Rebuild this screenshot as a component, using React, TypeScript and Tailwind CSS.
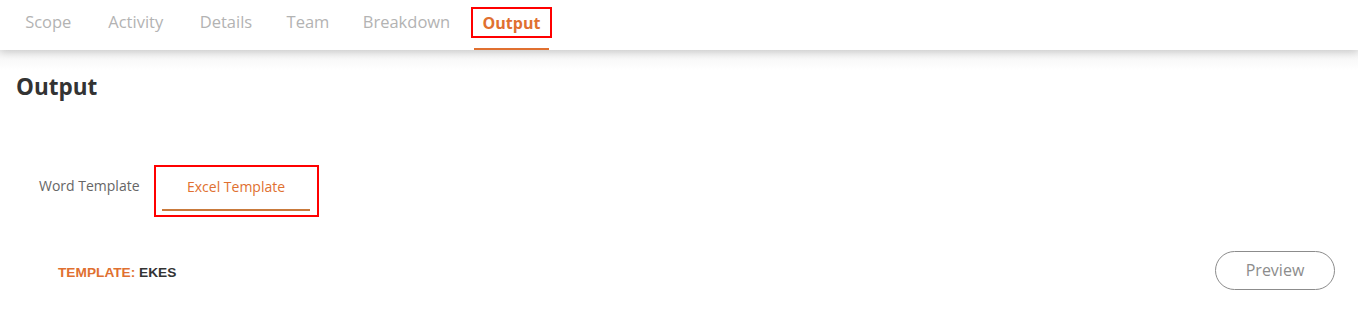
import React from "react";

const tabs: { label: string; w: string }[] = [
  { label: "Scope", w: "w-[82.5px]" },
  { label: "Activity", w: "w-[92.5px]" },
  { label: "Details", w: "w-[88px]" },
  { label: "Team", w: "w-[76px]" },
  { label: "Breakdown", w: "w-[121px]" },
];

export default function App() {
  return (
    <div className="w-[1358px] h-[312px] bg-white overflow-hidden" style={{ fontFamily: '"Open Sans", sans-serif' }}>
      <div className="relative z-10 h-[50px] bg-white shadow-[0_2px_8px_rgba(0,0,0,0.18)] flex items-start pl-[7px]">
        {tabs.map((t) => (
          <div key={t.label} className={`${t.w} h-[45px] flex items-center justify-center`}>
            <span className="text-[16.5px] text-[#b3b3b3] leading-none">{t.label}</span>
          </div>
        ))}
        <div className="relative ml-[4px] h-[50px]">
          <div className="mt-[7px] border-2 border-[#ff0000] w-[81px] h-[31px] flex items-center justify-center">
            <span className="text-[16px] font-bold text-[#e07030] leading-none">Output</span>
          </div>
          <div className="absolute bottom-0 left-[3px] right-[3px] h-[2px] bg-[#e07030]" />
        </div>
      </div>
      <div className="bg-gradient-to-b from-[#f3f3f3] to-white h-[20px]" />
      <div className="px-[16px] pt-[8px]">
        <h1 className="text-[22.5px] font-bold text-[#333333] leading-none -mt-[2px]">Output</h1>
      </div>
      <div className="flex items-start pl-[23px] mt-[66px]">
        <div className="h-[52px] pl-[16px] pr-[14px] flex items-center">
          <span className="text-[14px] text-[#666666] -mt-[10px]">Word Template</span>
        </div>
        <div className="relative w-[165px] h-[52px] border-2 border-[#ff0000] flex justify-center">
          <span className="text-[14px] text-[#e07030] mt-[9px]">Excel Template</span>
          <div className="absolute left-[6px] right-[7px] top-[42px] h-[2px] bg-[#c97a3c]" />
        </div>
      </div>
      <div className="flex items-start justify-between pl-[58px] pr-[23px] mt-[34px]">
        <div className="text-[13.7px] font-bold uppercase mt-[12px]" style={{ fontFamily: '"Liberation Sans", Arial, sans-serif' }}>
          <span className="text-[#e07030]">Template: </span>
          <span className="text-[#333333]">EKES</span>
        </div>
        <button className="w-[120px] h-[39px] rounded-full border border-[#8c8c8c] text-[16px] text-[#8c8c8c] bg-white">
          Preview
        </button>
      </div>
    </div>
  );
}
